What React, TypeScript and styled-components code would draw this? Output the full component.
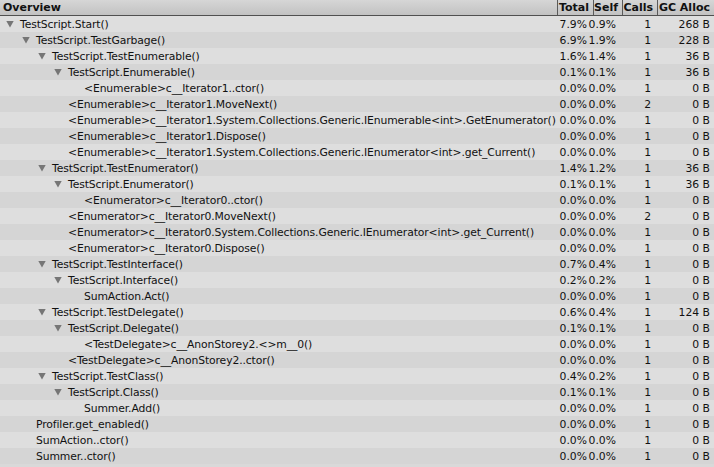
import React from 'react';
import styled, { createGlobalStyle } from 'styled-components';

const GlobalStyle = createGlobalStyle`
  html, body {
    margin: 0;
    padding: 0;
    background: #d9d9d9;
  }
  body {
    font-family: "DejaVu Sans", "Liberation Sans", sans-serif;
    font-size: 10.8px;
    color: #111;
  }
`;

const COLS = '1fr 36px 29px 35px 57px';

const Panel = styled.div`
  width: 714px;
  height: 467px;
  overflow: hidden;
  background: #d9d9d9;
`;

const Header = styled.div`
  display: grid;
  grid-template-columns: ${COLS};
  height: 15px;
  background: linear-gradient(#d6d6d6, #c2c2c2);
  border-bottom: 1px solid #505050;
`;

const HeaderCell = styled.div<{ $align?: 'left' | 'right' }>`
  display: flex;
  align-items: center;
  justify-content: ${(p) => (p.$align === 'left' ? 'flex-start' : 'flex-end')};
  padding: 0 4px 0 3px;
  font-weight: bold;
  font-size: 11px;
  line-height: 15px;
  border-left: ${(p) => (p.$align === 'left' ? 'none' : '1px solid #5a5a5a')};
  white-space: nowrap;
`;

const Row = styled.div<{ $odd: boolean }>`
  display: grid;
  grid-template-columns: ${COLS};
  height: 16px;
  background: ${(p) => (p.$odd ? '#d5d5d5' : '#dedede')};
`;

const NameCell = styled.div<{ $depth: number }>`
  display: flex;
  align-items: center;
  min-width: 0;
  padding-left: ${(p) => 6 + p.$depth * 16}px;
  white-space: nowrap;
  letter-spacing: -0.12px;
`;

const Arrow = styled.span<{ $show: boolean }>`
  width: 8px;
  height: 7px;
  margin-right: 6px;
  flex: none;
  background: ${(p) => (p.$show ? '#767676' : 'transparent')};
  clip-path: polygon(0 0, 100% 0, 50% 100%);
`;

const ValueCell = styled.div<{ $pad?: number }>`
  display: flex;
  align-items: center;
  justify-content: flex-end;
  padding-right: ${(p) => p.$pad ?? 4}px;
  white-space: nowrap;
`;

type Item = {
  name: string;
  depth: number;
  open?: boolean;
  total: string;
  self: string;
  calls: string;
  gc: string;
};

const rows: Item[] = [
  { name: 'TestScript.Start()', depth: 0, open: true, total: '7.9%', self: '0.9%', calls: '1', gc: '268 B' },
  { name: 'TestScript.TestGarbage()', depth: 1, open: true, total: '6.9%', self: '1.9%', calls: '1', gc: '228 B' },
  { name: 'TestScript.TestEnumerable()', depth: 2, open: true, total: '1.6%', self: '1.4%', calls: '1', gc: '36 B' },
  { name: 'TestScript.Enumerable()', depth: 3, open: true, total: '0.1%', self: '0.1%', calls: '1', gc: '36 B' },
  { name: '<Enumerable>c__Iterator1..ctor()', depth: 4, total: '0.0%', self: '0.0%', calls: '1', gc: '0 B' },
  { name: '<Enumerable>c__Iterator1.MoveNext()', depth: 3, total: '0.0%', self: '0.0%', calls: '2', gc: '0 B' },
  { name: '<Enumerable>c__Iterator1.System.Collections.Generic.IEnumerable<int>.GetEnumerator()', depth: 3, total: '0.0%', self: '0.0%', calls: '1', gc: '0 B' },
  { name: '<Enumerable>c__Iterator1.Dispose()', depth: 3, total: '0.0%', self: '0.0%', calls: '1', gc: '0 B' },
  { name: '<Enumerable>c__Iterator1.System.Collections.Generic.IEnumerator<int>.get_Current()', depth: 3, total: '0.0%', self: '0.0%', calls: '1', gc: '0 B' },
  { name: 'TestScript.TestEnumerator()', depth: 2, open: true, total: '1.4%', self: '1.2%', calls: '1', gc: '36 B' },
  { name: 'TestScript.Enumerator()', depth: 3, open: true, total: '0.1%', self: '0.1%', calls: '1', gc: '36 B' },
  { name: '<Enumerator>c__Iterator0..ctor()', depth: 4, total: '0.0%', self: '0.0%', calls: '1', gc: '0 B' },
  { name: '<Enumerator>c__Iterator0.MoveNext()', depth: 3, total: '0.0%', self: '0.0%', calls: '2', gc: '0 B' },
  { name: '<Enumerator>c__Iterator0.System.Collections.Generic.IEnumerator<int>.get_Current()', depth: 3, total: '0.0%', self: '0.0%', calls: '1', gc: '0 B' },
  { name: '<Enumerator>c__Iterator0.Dispose()', depth: 3, total: '0.0%', self: '0.0%', calls: '1', gc: '0 B' },
  { name: 'TestScript.TestInterface()', depth: 2, open: true, total: '0.7%', self: '0.4%', calls: '1', gc: '0 B' },
  { name: 'TestScript.Interface()', depth: 3, open: true, total: '0.2%', self: '0.2%', calls: '1', gc: '0 B' },
  { name: 'SumAction.Act()', depth: 4, total: '0.0%', self: '0.0%', calls: '1', gc: '0 B' },
  { name: 'TestScript.TestDelegate()', depth: 2, open: true, total: '0.6%', self: '0.4%', calls: '1', gc: '124 B' },
  { name: 'TestScript.Delegate()', depth: 3, open: true, total: '0.1%', self: '0.1%', calls: '1', gc: '0 B' },
  { name: '<TestDelegate>c__AnonStorey2.<>m__0()', depth: 4, total: '0.0%', self: '0.0%', calls: '1', gc: '0 B' },
  { name: '<TestDelegate>c__AnonStorey2..ctor()', depth: 3, total: '0.0%', self: '0.0%', calls: '1', gc: '0 B' },
  { name: 'TestScript.TestClass()', depth: 2, open: true, total: '0.4%', self: '0.2%', calls: '1', gc: '0 B' },
  { name: 'TestScript.Class()', depth: 3, open: true, total: '0.1%', self: '0.1%', calls: '1', gc: '0 B' },
  { name: 'Summer.Add()', depth: 4, total: '0.0%', self: '0.0%', calls: '1', gc: '0 B' },
  { name: 'Profiler.get_enabled()', depth: 1, total: '0.0%', self: '0.0%', calls: '1', gc: '0 B' },
  { name: 'SumAction..ctor()', depth: 1, total: '0.0%', self: '0.0%', calls: '1', gc: '0 B' },
  { name: 'Summer..ctor()', depth: 1, total: '0.0%', self: '0.0%', calls: '1', gc: '0 B' },
];

const App = () => {
  return (
    <>
      <GlobalStyle />
      <Panel>
        <Header>
          <HeaderCell $align="left">Overview</HeaderCell>
          <HeaderCell>Total</HeaderCell>
          <HeaderCell>Self</HeaderCell>
          <HeaderCell>Calls</HeaderCell>
          <HeaderCell>GC Alloc</HeaderCell>
        </Header>
        {rows.map((r, i) => (
          <Row key={i} $odd={i % 2 === 1}>
            <NameCell $depth={r.depth}>
              <Arrow $show={!!r.open} />
              {r.name}
            </NameCell>
            <ValueCell $pad={6}>{r.total}</ValueCell>
            <ValueCell $pad={6}>{r.self}</ValueCell>
            <ValueCell $pad={6}>{r.calls}</ValueCell>
            <ValueCell>{r.gc}</ValueCell>
          </Row>
        ))}
      </Panel>
    </>
  );
};

export default App;
